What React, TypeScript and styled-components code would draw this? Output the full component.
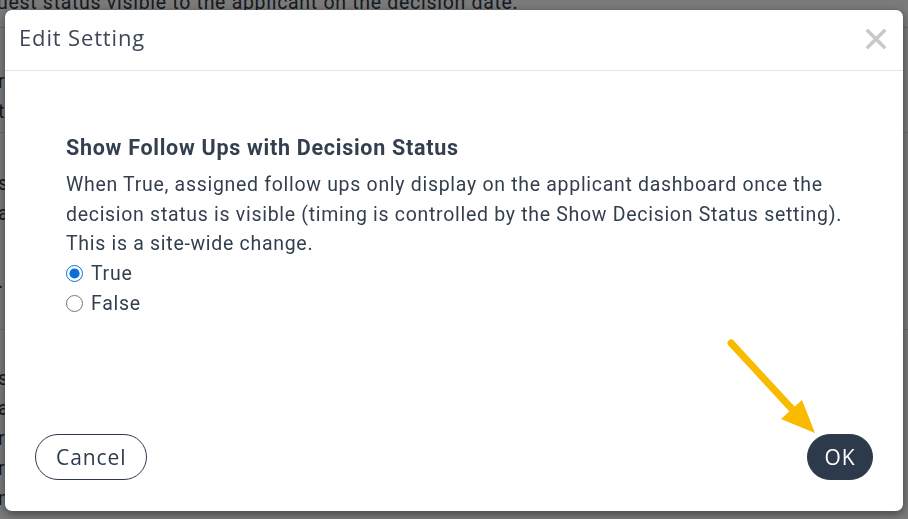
import React, { useState } from "react";
import styled, { createGlobalStyle } from "styled-components";

const GlobalStyle = createGlobalStyle`
  html, body {
    margin: 0;
    padding: 0;
    background: #ffffff;
    overflow: hidden;
  }
  body {
    font-family: Roboto, "Liberation Sans", sans-serif;
    color: #333f4e;
  }
`;

const App: React.FC = () => {
  const [value, setValue] = useState("true");

  return (
    <>
      <GlobalStyle />
      <Page>
        <BackTop>uest status visible to the applicant on the decision date.</BackTop>
        <BackRule $top={13} />
        <BackBlock $top={39} $bottom={5}>
          <BackLine>r</BackLine>
          <BackLine>t</BackLine>
        </BackBlock>
        <BackRule />
        <BackBlock $top={36} $bottom={32}>
          <BackLine>s</BackLine>
          <BackLine>a</BackLine>
          <BackLine $gap={38}>.</BackLine>
        </BackBlock>
        <BackRule />
        <BackBlock $top={34} $bottom={0}>
          <BackLine>s</BackLine>
          <BackLine>a</BackLine>
          <BackLine>r</BackLine>
          <BackLine>r</BackLine>
          <BackLine>n</BackLine>
        </BackBlock>
      </Page>

      <Overlay>
        <Modal>
          <Header>
            <Title>Edit Setting</Title>
            <CloseButton aria-label="Close">
              <svg width="20" height="20" viewBox="0 0 20 20">
                <path
                  d="M2 2 L18 18 M18 2 L2 18"
                  stroke="#c9c9c9"
                  strokeWidth="3.6"
                  strokeLinecap="square"
                />
              </svg>
            </CloseButton>
          </Header>

          <Body>
            <SettingName>Show Follow Ups with Decision Status</SettingName>
            <Description>
              When True, assigned follow ups only display on the applicant dashboard once the
              decision status is visible (timing is controlled by the Show Decision Status setting).
              This is a site-wide change.
            </Description>
            <Option>
              <Radio
                type="radio"
                name="setting"
                checked={value === "true"}
                onChange={() => setValue("true")}
              />
              True
            </Option>
            <Option>
              <Radio
                type="radio"
                name="setting"
                checked={value === "false"}
                onChange={() => setValue("false")}
              />
              False
            </Option>
          </Body>

          <Footer>
            <PillButton>Cancel</PillButton>
            <PillButton $primary>OK</PillButton>
          </Footer>

          <Arrow width="110" height="110" viewBox="0 0 110 110">
            <path d="M9 13 L70 79" stroke="#f9bb00" strokeWidth="7" strokeLinecap="round" />
            <path d="M59 89 L93 103 L80 70 Z" fill="#f9bb00" />
          </Arrow>
        </Modal>
      </Overlay>
    </>
  );
};

export default App;

const Page = styled.div`
  height: 519px;
  overflow: hidden;
  font-size: 19.5px;
  letter-spacing: 0.7px;
  color: #2c3745;
`;

const BackTop = styled.div`
  margin-top: -8px;
  line-height: 22px;
  margin-left: -3px;
`;

const BackRule = styled.div<{ $top?: number }>`
  height: 1px;
  background: #d8d8d8;
  margin-top: ${(p) => p.$top ?? 0}px;
`;

const BackBlock = styled.div<{ $top: number; $bottom: number }>`
  padding: ${(p) => p.$top}px 0 ${(p) => p.$bottom}px;
  display: flex;
  flex-direction: column;
`;

const BackLine = styled.div<{ $gap?: number }>`
  line-height: 30px;
  margin-left: -2px;
  margin-top: ${(p) => p.$gap ?? 0}px;
`;

const Overlay = styled.div`
  position: fixed;
  inset: 0;
  background: rgba(0, 0, 0, 0.52);
  display: flex;
  padding: 10px 5px 8px;
`;

const Modal = styled.div`
  position: relative;
  flex: 1;
  background: #ffffff;
  border-radius: 7px;
  box-shadow: 0 3px 10px rgba(0, 0, 0, 0.45);
  display: flex;
  flex-direction: column;
`;

const Header = styled.div`
  height: 61px;
  box-sizing: border-box;
  border-bottom: 1px solid #e3e3e3;
  display: flex;
  align-items: flex-start;
  justify-content: space-between;
  padding: 12px 17px 0 14px;
`;

const Title = styled.h4`
  margin: 0;
  font-family: "Open Sans", "DejaVu Sans", sans-serif;
  font-weight: 400;
  font-size: 22px;
  line-height: 30px;
  letter-spacing: 0.85px;
  color: #3b4757;
`;

const CloseButton = styled.button`
  border: none;
  background: none;
  padding: 7px 0 0;
  display: flex;
  cursor: pointer;
`;

const Body = styled.div`
  flex: 1;
  padding: 62px 61px 0;
  display: flex;
  flex-direction: column;
`;

const SettingName = styled.div`
  font-weight: 700;
  font-size: 21.5px;
  line-height: 30px;
  letter-spacing: 0.72px;
  color: #333f4e;
  margin-bottom: 7px;
`;

const Description = styled.p`
  margin: 0;
  font-size: 19.5px;
  line-height: 29.5px;
  letter-spacing: 0.7px;
  color: #333f4e;
`;

const Option = styled.label`
  display: flex;
  align-items: center;
  gap: 8px;
  font-size: 19.5px;
  line-height: 30px;
  letter-spacing: 0.7px;
  color: #333f4e;
`;

const Radio = styled.input`
  width: 17px;
  height: 17px;
  margin: 0;
  accent-color: #0b6fd7;
`;

const Footer = styled.div`
  display: flex;
  justify-content: space-between;
  align-items: center;
  padding: 0 30px 31px;
`;

const PillButton = styled.button<{ $primary?: boolean }>`
  height: 46px;
  padding: 0 ${(p) => (p.$primary ? 16.5 : 20)}px;
  border-radius: 23px;
  font-family: "Open Sans", "DejaVu Sans", sans-serif;
  font-size: 21px;
  letter-spacing: 0.9px;
  border: 1px solid #2d3a4b;
  background: ${(p) => (p.$primary ? "#2d3a4b" : "#ffffff")};
  color: ${(p) => (p.$primary ? "#ffffff" : "#2d3a4b")};
  cursor: pointer;
`;

const Arrow = styled.svg`
  position: absolute;
  left: 717px;
  top: 320px;
  pointer-events: none;
`;
